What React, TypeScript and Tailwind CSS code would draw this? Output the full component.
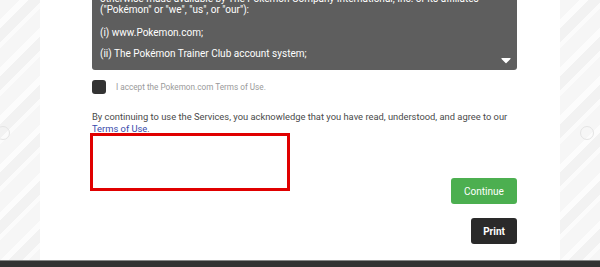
import { FaCaretDown } from "react-icons/fa";

const stripes =
  "bg-[repeating-linear-gradient(135deg,#f6f6f6_0px,#f6f6f6_14px,#fcfcfc_14px,#fcfcfc_20px,#f2f2f2_20px,#f2f2f2_30px,#fbfbfb_30px,#fbfbfb_34px)]";

const Side = ({ right }: { right?: boolean }) => (
  <div className={`w-[40px] h-full relative ${stripes}`}>
    <div
      className={`absolute top-[126px] ${right ? "left-[20px]" : "left-[-4px]"} w-[14px] h-[14px] rounded-full border-[1.5px] border-[#e4e4e4]`}
    ></div>
  </div>
);

const App = () => {
  return (
    <div
      className="w-[600px] h-[267px] overflow-hidden flex flex-col bg-white"
      style={{ fontFamily: "Roboto, 'Liberation Sans', sans-serif" }}
    >
      <div className="flex h-[260px]">
        <Side />
        <div className="flex-1 bg-white pl-[52px] pr-[43px] flex flex-col">
          {/* Terms scroll box */}
          <div className="h-[78px] -mt-[8px] shrink-0 bg-[#5e5e5e] rounded-b-[3px] text-white text-[10px] leading-[11px] px-[8px] pt-[1px] relative overflow-hidden">
            <p className="whitespace-nowrap">
              otherwise made available by The Pokémon Company International, Inc. or its affiliates
            </p>
            <p>("Pokémon" or "we", "us", or "our"):</p>
            <p className="mt-[12px]">(i) www.Pokemon.com;</p>
            <p className="mt-[10px]">(ii) The Pokémon Trainer Club account system;</p>
            <FaCaretDown className="absolute right-[3px] bottom-[2px] w-[16px] h-[16px]" />
          </div>
          {/* Accept */}
          <div className="flex items-center mt-[10px]">
            <div className="w-[14px] h-[14px] rounded-[3px] bg-[#333]"></div>
            <span className="ml-[10px] text-[8.2px] text-[#9a9a9a]">
              I accept the Pokemon.com Terms of Use.
            </span>
          </div>
          {/* Notice */}
          <p className="mt-[17px] text-[9.35px] leading-[12px] text-[#4a4a4a]">
            By continuing to use the Services, you acknowledge that you have read, understood, and agree to our{" "}
            <a className="text-[#3949ab] underline">Terms of Use</a>.
          </p>
          <div className="relative">
            <div className="absolute left-[-2px] top-[-2px] w-[200px] h-[58px] border-[3px] border-[#e00000]"></div>
          </div>
          {/* Buttons */}
          <div className="flex flex-col items-end mt-[43px] gap-[14px]">
            <button className="w-[66px] h-[26px] rounded-[3px] bg-[#4caf50] text-white text-[10px]">
              Continue
            </button>
            <button className="w-[46px] h-[26px] rounded-[3px] bg-[#2a2a2a] text-white text-[10px] font-bold">
              Print
            </button>
          </div>
        </div>
        <Side right />
      </div>
      <div className="flex-1 bg-[#333] border-t-[1.5px] border-[#888]"></div>
    </div>
  );
};

export default App;
